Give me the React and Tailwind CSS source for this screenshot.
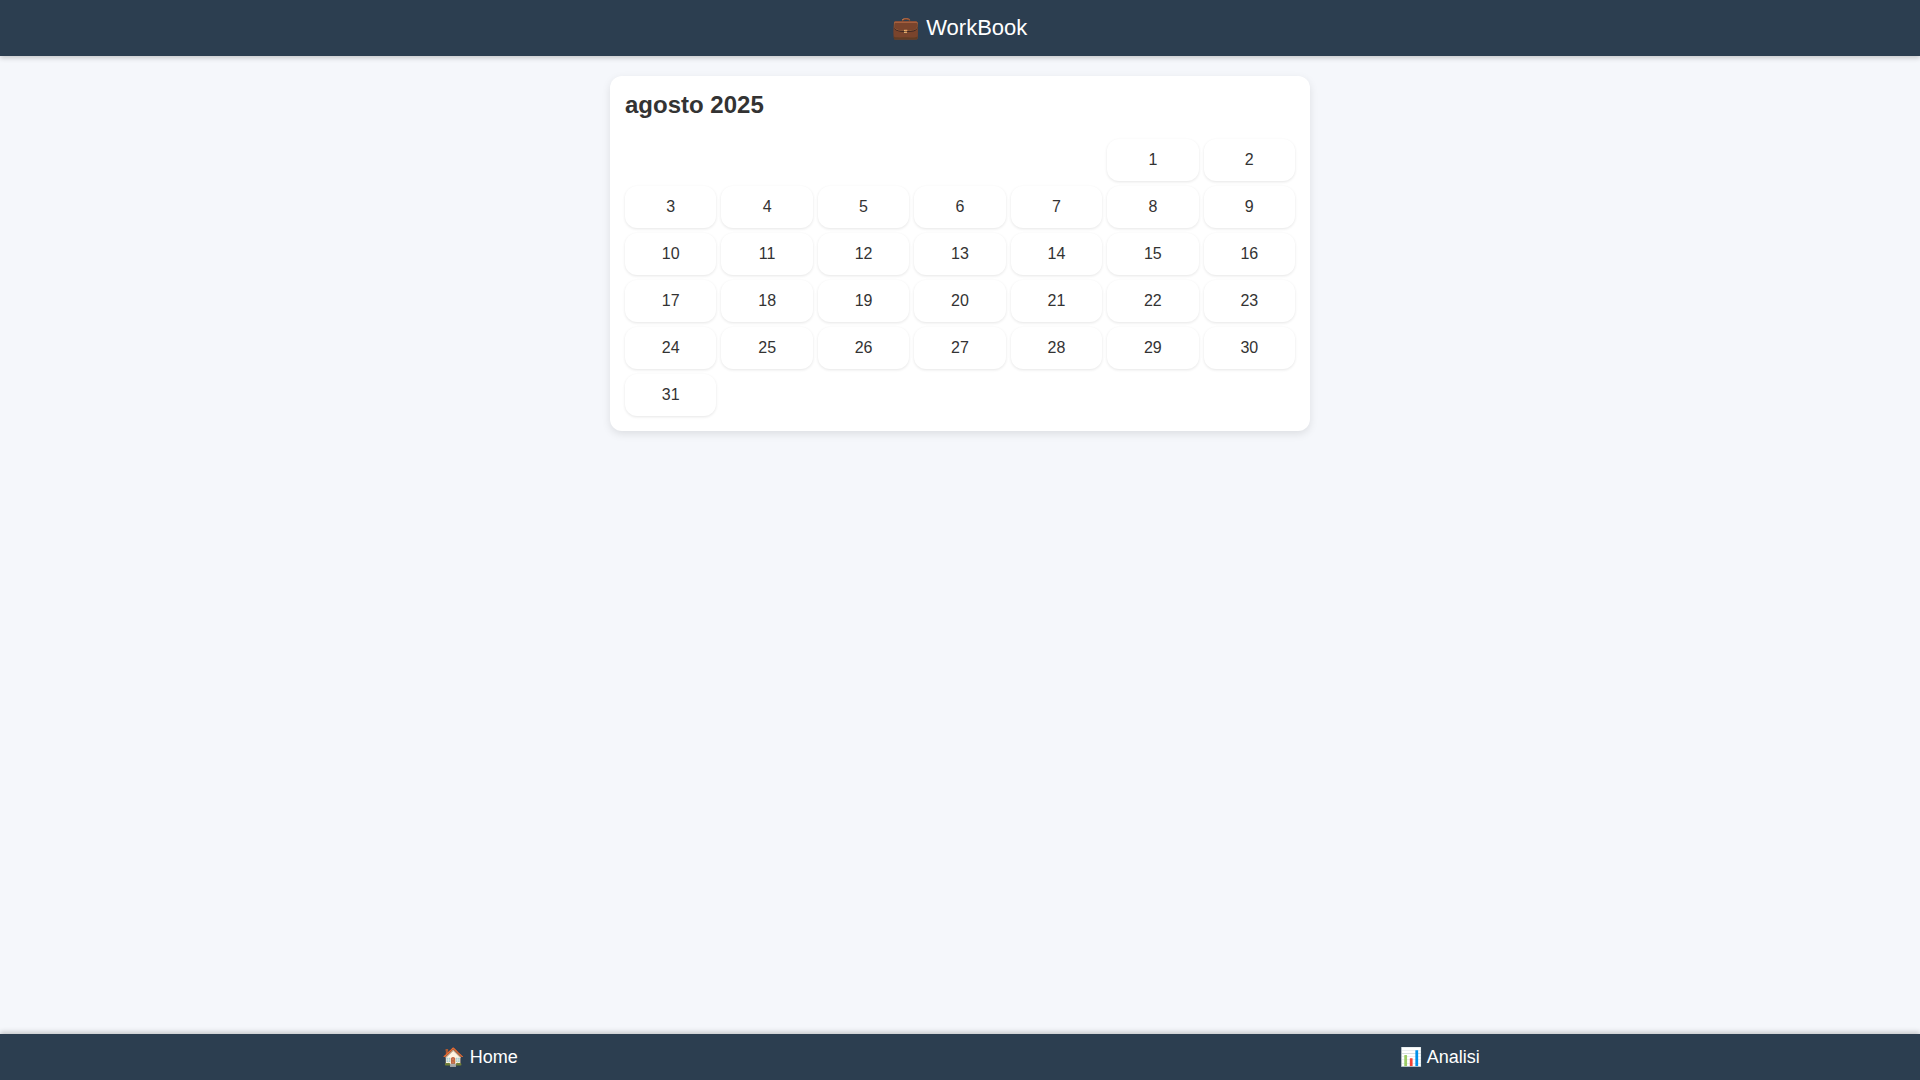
import React, { useMemo, useState } from 'react';

const YEAR = 2025;
const MONTH = 7;

const DayCell = React.memo(({ day, onSelect }) => (
  <button
    type="button"
    onClick={() => onSelect(day)}
    className="h-[42px] rounded-xl bg-white text-center text-base text-[#333] shadow-[0_1px_3px_rgba(0,0,0,0.1)] cursor-pointer"
  >
    {day}
  </button>
));

const Calendar = () => {
  const [, setSelectedDay] = useState(null);

  // Empty slots before the first day, weeks start on Sunday
  const { offset, days } = useMemo(() => {
    const count = new Date(YEAR, MONTH + 1, 0).getDate();
    return {
      offset: new Date(YEAR, MONTH, 1).getDay(),
      days: Array.from({ length: count }, (_, i) => i + 1),
    };
  }, []);

  return (
    <section className="w-full max-w-[700px] rounded-xl bg-white p-[15px] shadow-[0_3px_8px_rgba(0,0,0,0.1)]">
      <h2 className="mb-5 text-2xl leading-7 font-bold text-[#333]">agosto 2025</h2>
      <div className="grid grid-cols-7 gap-[5px]">
        {Array.from({ length: offset }, (_, i) => (
          <div key={`empty-${i}`} />
        ))}
        {days.map(day => (
          <DayCell key={day} day={day} onSelect={setSelectedDay} />
        ))}
      </div>
    </section>
  );
};

const App = () => {
  return (
    <div className="flex min-h-screen flex-col bg-[#f5f7fb] font-['Liberation_Sans','Noto_Color_Emoji',sans-serif]">
      <header className="flex h-14 items-center justify-center bg-[#2c3e50] text-white shadow-[0_2px_5px_rgba(0,0,0,0.2)]">
        <h1 className="text-[22px] leading-6">💼 WorkBook</h1>
      </header>

      <main className="flex flex-1 flex-col items-center px-5 pt-5 pb-5">
        <Calendar />
      </main>

      <nav className="sticky bottom-0 flex h-[46px] items-center bg-[#2c3e50] text-lg text-white shadow-[0_-2px_5px_rgba(0,0,0,0.2)]">
        <a href="#home" className="flex-1 text-center">🏠 Home</a>
        <a href="#analisi" className="flex-1 text-center">📊 Analisi</a>
      </nav>
    </div>
  );
};

export default App;
